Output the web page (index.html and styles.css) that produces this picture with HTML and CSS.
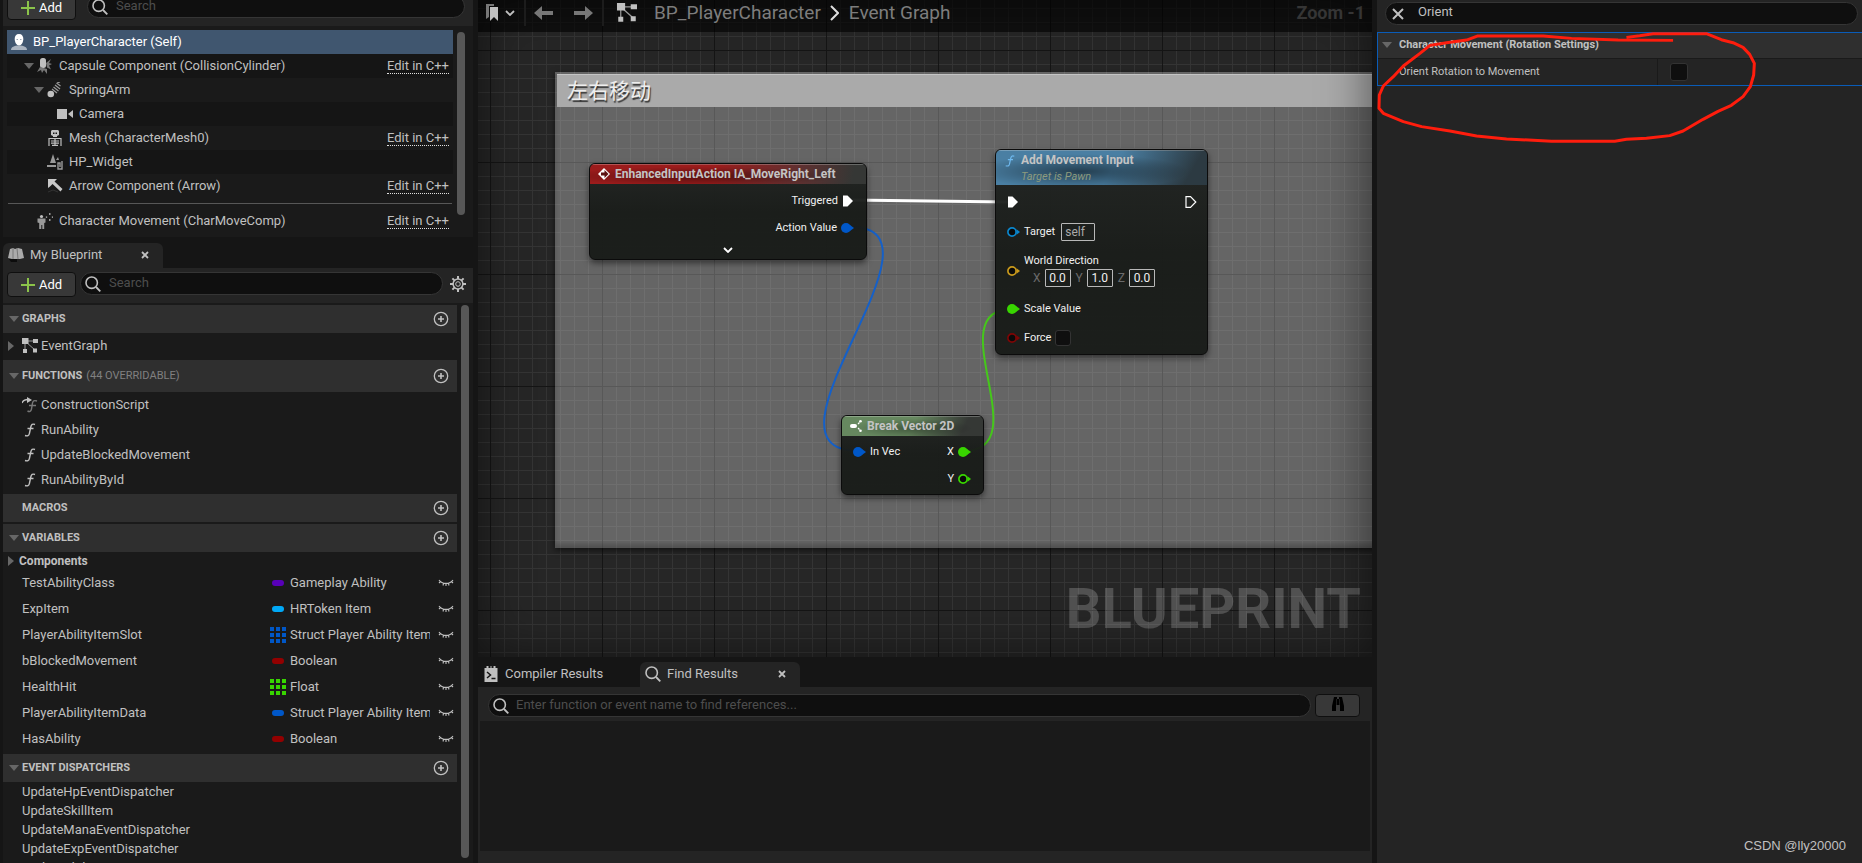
FILE: index.html
```html
<!DOCTYPE html>
<html lang="en">
<head>
 <meta charset="UTF-8">
 <title>BP_PlayerCharacter</title>
 <link rel="stylesheet" href="styles.css">
</head>
<body>
<!-- icon sprite -->
<svg class="sprite" aria-hidden="true">
 <symbol id="i-plus" viewBox="0 0 14 14"><path d="M7 0v14M0 7h14" stroke="#8bc34a" stroke-width="2"/></symbol>
 <symbol id="i-search" viewBox="0 0 16 16"><circle cx="6.700" cy="6.700" r="5.700" fill="none" stroke="currentColor" stroke-width="1.600"/><path d="M11 11l4.300 4.300" stroke="currentColor" stroke-width="1.800"/></symbol>
 <symbol id="i-down" viewBox="0 0 10 6"><path d="M0 0h10L5 6z" fill="#676767"/></symbol>
 <symbol id="i-right" viewBox="0 0 6 10"><path d="M0 0l6 5-6 5z" fill="#676767"/></symbol>
 <symbol id="i-close" viewBox="0 0 8 8"><path d="M1 1l6 6M7 1L1 7" stroke="currentColor" stroke-width="1.800"/></symbol>
 <symbol id="i-clear" viewBox="0 0 14 14"><path d="M2 2l10 10M12 2L2 12" stroke="currentColor" stroke-width="2"/></symbol>
 <symbol id="i-addc" viewBox="0 0 16 16"><circle cx="8" cy="8" r="6.700" fill="none" stroke="currentColor" stroke-width="1.300"/><path d="M8 5v6M5 8h6" stroke="currentColor" stroke-width="1.600"/></symbol>
 <symbol id="i-user" viewBox="0 0 16 16"><path d="M0 16c0-3 3-4.500 8-4.500s8 1.500 8 4.500z" fill="#aab4c0"/><path d="M8 0c3 0 4.300 2 4.300 5S10.500 11.500 8 11.500 3.700 8 3.700 5 5 0 8 0z" fill="#fff"/><path d="M5.500 5.500h1.500M9 5.500h1.500" stroke="#9aa6b4"/></symbol>
 <symbol id="i-capsule" viewBox="0 0 16 16"><rect x="3" y="0" width="6" height="10" rx="2.500" fill="#c0c0c0"/><path d="M9 5l5-4-2 4 3 1-3 1.500 2 4-4-2M3 9l-3 5 4-2 1 3 2-3 3 4v-5" fill="#777"/></symbol>
 <symbol id="i-spring" viewBox="0 0 16 16"><circle cx="3.800" cy="12" r="3.300" fill="#c0c0c0"/><path d="M5 7l5 4M6.500 5l5 4M8 3l5 4M9.500 1l4 3M10 1l3-1" stroke="#999" stroke-width="1.300"/></symbol>
 <symbol id="i-camera" viewBox="0 0 16 16"><path d="M0 3h10v10H0zM16 4v8l-5-4z" fill="#c0c0c0"/></symbol>
 <symbol id="i-mesh" viewBox="0 0 16 16"><path d="M5 0h6l1 1v4l-2 1v1H6V6L4 5V1z" fill="#c0c0c0"/><path d="M6 2.500h1.500V4H6zM8.500 2.500H10V4H8.500z" fill="#151515"/><path d="M2 16V8.500h12V16M4 11h8M4 13.200h8M5 15.400h6M8 8v8" fill="none" stroke="#c0c0c0" stroke-width="1.200"/></symbol>
 <symbol id="i-widget" viewBox="0 0 16 16"><path d="M3 9L6 0l3 9zM9 6l2-3 1 3zM0 11h9v2H0z" fill="#999"/><path d="M15 7v8h-4V9h2v4" fill="none" stroke="#999" stroke-width="1.400"/></symbol>
 <symbol id="i-arrow" viewBox="0 0 16 16"><path d="M1 1h9L7.500 3.500l8 7.500-2 2.500-8-7.500L3 8.500 1 10z" fill="#c8c8c8"/><path d="M1 14l5-2 5 2" fill="none" stroke="#333"/></symbol>
 <symbol id="i-move" viewBox="0 0 16 16"><circle cx="4.500" cy="3.500" r="1.600" fill="#c0c0c0"/><path d="M.500 5.500h8v4l-1.300.500V16H5.300v-4h-1v4H2.200v-6L.500 9.500z" fill="#999"/><path d="M9.500 3.500v1.300M12 1h1.500M15.500 3.500v1.300M12 7h1.500" stroke="#c0c0c0" stroke-width="1.300"/></symbol>
 <symbol id="i-book" viewBox="0 0 16 16"><path d="M2 2l3-1 2 1 3-1 4 1 2 9-4 1H4l-4-1z" fill="#aaa"/><path d="M5 1v11M9 1l1 11" stroke="#777"/><path d="M1 12h8v3H3z" fill="#0c0c0c"/></symbol>
 <symbol id="i-gear" viewBox="0 0 16 16"><circle cx="8" cy="8" r="4.900" fill="none" stroke="currentColor" stroke-width="1.500"/><circle cx="8" cy="8" r="2.300" fill="none" stroke="currentColor"/><path d="M8 0v3M8 13v3M0 8h3M13 8h3M2.400 2.400l2 2M11.600 11.600l2 2M13.600 2.400l-2 2M4.400 11.600l-2 2" stroke="currentColor" stroke-width="2"/></symbol>
 <symbol id="i-graph" viewBox="0 0 16 16"><path d="M3 4v10M3 3h11M4 4l9 8" stroke="#999" fill="none"/><path d="M0 0h6.500v6H0zM11 1h5v4h-5zM1 11h4v4H1zM11 10.500h4v4h-4z" fill="#c0c0c0"/></symbol>
 <symbol id="i-func" viewBox="0 0 12 14"><path d="M11 1.500C8.500.500 7.300 1.500 6.800 4L5.400 10.500C5 12.800 3.500 13.300 1 12.500M3.500 5.500h6" fill="none" stroke="currentColor" stroke-width="1.400"/></symbol>
 <symbol id="i-construct" viewBox="0 0 16 16"><path d="M15 4c-3-1-4 0-4.500 2L9.500 12c-.500 2.500-2 3-4 2M7 8.500h7" fill="none" stroke="#777" stroke-width="1.400"/><path d="M0 6c1-3 3-3.500 6-3.500" fill="none" stroke="#c0c0c0" stroke-width="1.400"/><path d="M5 0l5 3-5 3z" fill="#c0c0c0"/></symbol>
 <symbol id="i-eye" viewBox="0 0 16 8"><path d="M1 1c3 4.500 11 4.500 14 0M2.500 2.500L1 4M5.500 4.500l-.500 2M8 5v2M10.500 4.500l.500 2M13.500 2.500L15 4" fill="none" stroke="currentColor" stroke-width="1.100"/></symbol>
 <symbol id="i-grid" viewBox="0 0 16 16"><path d="M0 0h4v4H0zM6 0h4v4H6zM12 0h4v4h-4zM0 6h4v4H0zM6 6h4v4H6zM12 6h4v4h-4zM0 12h4v4H0zM6 12h4v4H6zM12 12h4v4h-4z" fill="currentColor"/></symbol>
 <symbol id="i-marks" viewBox="0 0 12 17"><path d="M0 0h8v2H3v11L0 15z" fill="#777"/><path d="M4 3h8v14l-4-4-4 4z" fill="#c0c0c0"/></symbol>
 <symbol id="i-chev" viewBox="0 0 10 6"><path d="M1 1l4 4 4-4" fill="none" stroke="currentColor" stroke-width="1.800"/></symbol>
 <symbol id="i-back" viewBox="0 0 20 14"><path d="M0 7l8-7v5h11v4H8v5z" fill="#777"/></symbol>
 <symbol id="i-fwd" viewBox="0 0 20 14"><path d="M20 7l-8-7v5H1v4h11v5z" fill="#777"/></symbol>
 <symbol id="i-crumb" viewBox="0 0 9 16"><path d="M1 1l7 7-7 7" fill="none" stroke="#ddd" stroke-width="2"/></symbol>
 <symbol id="i-event" viewBox="0 0 12 12"><path d="M6 0l6 6-6 6-6-6z" fill="#fff"/><path d="M6.500 2L10.500 6l-4 4V7.500H3v-3h3.500z" fill="#5c1212"/></symbol>
 <symbol id="i-break" viewBox="0 0 12 12"><rect x="0" y="4" width="7" height="4" rx="2" fill="#fff"/><path d="M8 4l1.500-1.500M8 8l1.500 1.500" stroke="#fff" stroke-width="1.200"/><circle cx="10.500" cy="1.300" r="1.300" fill="#fff"/><circle cx="10.500" cy="10.700" r="1.300" fill="#fff"/></symbol>
 <symbol id="p-exec" viewBox="0 0 12 12"><path d="M1 .500h4.500L11 6l-5.500 5.500H1z" fill="#fff"/></symbol>
 <symbol id="p-exec-open" viewBox="0 0 12 12"><path d="M1 .700h4.500L10.800 6l-5.300 5.300H1z" fill="none" stroke="#fff" stroke-width="1.200"/></symbol>
 <symbol id="p-full" viewBox="0 0 13 10"><circle cx="5" cy="5" r="5" fill="currentColor"/><path d="M9 2l4 3-4 3z" fill="currentColor"/></symbol>
 <symbol id="p-open" viewBox="0 0 13 10"><circle cx="5" cy="5" r="4.100" fill="#0a0a0a" stroke="currentColor" stroke-width="1.700"/><path d="M9.500 2.200L13 5 9.500 7.800z" fill="currentColor"/></symbol>
 <symbol id="i-log" viewBox="0 0 13 16"><path d="M0 2h2V0h2v2h2V0h1v2h2V0h2v2h2v14H0z" fill="#c0c0c0"/><path d="M2.500 6L6 9l-3.500 3M7 12.500h4" fill="none" stroke="#151515" stroke-width="1.500"/></symbol>
 <symbol id="i-bino" viewBox="0 0 12 14"><path d="M2 0h3v2h2V0h3l2 9v5H8V8H4v6H0V9z" fill="#000"/><path d="M4.500 2v6M7.500 2v6" stroke="#333" stroke-width=".600"/></symbol>
</svg>

<div class="editor">
 <aside class="left">
  <section class="panel components">
   <div class="toolbar">
    <button class="add-btn"><svg class="ic14"><use href="#i-plus"/></svg>Add</button>
    <label class="search wide"><svg class="ic16"><use href="#i-search"/></svg><input type="text" placeholder="Search" aria-label="Search components"></label>
   </div>
   <div class="tree-wrap">
    <ul class="tree">
     <li class="selected"><svg class="ic16"><use href="#i-user"/></svg><span>BP_PlayerCharacter (Self)</span></li>
     <li class="d1"><svg class="tri"><use href="#i-down"/></svg><svg class="ic16"><use href="#i-capsule"/></svg><span>Capsule Component (CollisionCylinder)</span><a href="#">Edit in C++</a></li>
     <li class="d2"><svg class="tri"><use href="#i-down"/></svg><svg class="ic16"><use href="#i-spring"/></svg><span>SpringArm</span></li>
     <li class="d3"><i class="tri"></i><svg class="ic16"><use href="#i-camera"/></svg><span>Camera</span></li>
     <li class="d2"><i class="tri"></i><svg class="ic16"><use href="#i-mesh"/></svg><span>Mesh (CharacterMesh0)</span><a href="#">Edit in C++</a></li>
     <li class="d2"><i class="tri"></i><svg class="ic16"><use href="#i-widget"/></svg><span>HP_Widget</span></li>
     <li class="d2"><i class="tri"></i><svg class="ic16"><use href="#i-arrow"/></svg><span>Arrow Component (Arrow)</span><a href="#">Edit in C++</a></li>
     <li class="split"></li>
     <li class="d1"><i class="tri"></i><svg class="ic16"><use href="#i-move"/></svg><span>Character Movement (CharMoveComp)</span><a href="#">Edit in C++</a></li>
    </ul>
    <div class="scroll short"></div>
   </div>
  </section>

  <section class="panel blueprint">
   <div class="tabs">
    <div class="tab active"><svg class="ic16"><use href="#i-book"/></svg><span>My Blueprint</span><button class="close" aria-label="Close"><svg class="ic8"><use href="#i-close"/></svg></button></div>
   </div>
   <div class="toolbar">
    <button class="add-btn"><svg class="ic14"><use href="#i-plus"/></svg>Add</button>
    <label class="search"><svg class="ic16"><use href="#i-search"/></svg><input type="text" placeholder="Search" aria-label="Search blueprint"></label>
    <button class="icon-btn gear" aria-label="Settings"><svg class="ic16"><use href="#i-gear"/></svg></button>
   </div>
   <div class="list-wrap">
    <div class="list">
     <div class="group">
      <h3><svg class="tri"><use href="#i-down"/></svg>GRAPHS<button class="icon-btn" aria-label="Add graph"><svg class="ic16"><use href="#i-addc"/></svg></button></h3>
      <div class="item graph-item"><svg class="tri-r"><use href="#i-right"/></svg><svg class="ic16"><use href="#i-graph"/></svg>EventGraph</div>
     </div>
     <div class="group">
      <h3 class="tall"><svg class="tri"><use href="#i-down"/></svg>FUNCTIONS <small>(44 OVERRIDABLE)</small><button class="icon-btn" aria-label="Add function"><svg class="ic16"><use href="#i-addc"/></svg></button></h3>
      <div class="item"><svg class="ic16"><use href="#i-construct"/></svg>ConstructionScript</div>
      <div class="item"><svg class="ic16 fn"><use href="#i-func"/></svg>RunAbility</div>
      <div class="item"><svg class="ic16 fn"><use href="#i-func"/></svg>UpdateBlockedMovement</div>
      <div class="item"><svg class="ic16 fn"><use href="#i-func"/></svg>RunAbilityById</div>
     </div>
     <div class="group">
      <h3><i class="tri"></i>MACROS<button class="icon-btn" aria-label="Add macro"><svg class="ic16"><use href="#i-addc"/></svg></button></h3>
     </div>
     <div class="group">
      <h3><svg class="tri"><use href="#i-down"/></svg>VARIABLES<button class="icon-btn" aria-label="Add variable"><svg class="ic16"><use href="#i-addc"/></svg></button></h3>
      <div class="category"><svg class="tri-r"><use href="#i-right"/></svg>Components</div>
      <div class="var"><span>TestAbilityClass</span><i class="pill purple"></i><span class="type">Gameplay Ability</span><svg class="eye"><use href="#i-eye"/></svg></div>
      <div class="var"><span>ExpItem</span><i class="pill cyan"></i><span class="type">HRToken Item</span><svg class="eye"><use href="#i-eye"/></svg></div>
      <div class="var"><span>PlayerAbilityItemSlot</span><svg class="ic16 blue"><use href="#i-grid"/></svg><span class="type">Struct Player Ability Item</span><svg class="eye"><use href="#i-eye"/></svg></div>
      <div class="var"><span>bBlockedMovement</span><i class="pill red"></i><span class="type">Boolean</span><svg class="eye"><use href="#i-eye"/></svg></div>
      <div class="var"><span>HealthHit</span><svg class="ic16 green"><use href="#i-grid"/></svg><span class="type">Float</span><svg class="eye"><use href="#i-eye"/></svg></div>
      <div class="var"><span>PlayerAbilityItemData</span><i class="pill bluebg"></i><span class="type">Struct Player Ability Item</span><svg class="eye"><use href="#i-eye"/></svg></div>
      <div class="var"><span>HasAbility</span><i class="pill red"></i><span class="type">Boolean</span><svg class="eye"><use href="#i-eye"/></svg></div>
     </div>
     <div class="group">
      <h3><svg class="tri"><use href="#i-down"/></svg>EVENT DISPATCHERS<button class="icon-btn" aria-label="Add dispatcher"><svg class="ic16"><use href="#i-addc"/></svg></button></h3>
      <div class="dispatcher">UpdateHpEventDispatcher</div>
      <div class="dispatcher">UpdateSkillItem</div>
      <div class="dispatcher">UpdateManaEventDispatcher</div>
      <div class="dispatcher">UpdateExpEventDispatcher</div>
      <div class="dispatcher">UpdateAbilityEvent</div>
     </div>
    </div>
    <div class="scroll"></div>
   </div>
  </section>
 </aside>

 <main class="center">
  <div class="graph">
   <div class="comment"><div class="comment-title">左右移动</div></div>
   <svg class="wires">
    <path d="M372 200L530 202" stroke="#fff" stroke-width="3"/>
    <path d="M373 227C482 227 267 451 380 451" stroke="#1560c8" stroke-width="2"/>
    <path d="M485 451C562 451 459 309 534 309" stroke="#45c81a" stroke-width="2"/>
   </svg>

   <div class="node node-event">
    <div class="node-head red-head"><svg class="ic12"><use href="#i-event"/></svg>EnhancedInputAction IA_MoveRight_Left</div>
    <div class="pin-row out"><span>Triggered</span><svg class="exec"><use href="#p-exec"/></svg></div>
    <div class="pin-row out"><span>Action Value</span><svg class="pin blue"><use href="#p-full"/></svg></div>
    <button class="expand" aria-label="Expand"><svg class="chev"><use href="#i-chev"/></svg></button>
   </div>

   <div class="node node-move">
    <div class="node-head blue-head"><svg class="ic12 fblue"><use href="#i-func"/></svg><div>Add Movement Input<em>Target is Pawn</em></div></div>
    <div class="pin-row both"><svg class="exec"><use href="#p-exec"/></svg><svg class="exec"><use href="#p-exec-open"/></svg></div>
    <div class="pin-row"><svg class="pin sky"><use href="#p-open"/></svg><label for="target">Target</label><input id="target" class="self" type="text" value="self"></div>
    <div class="pin-row vector"><svg class="pin gold"><use href="#p-open"/></svg>
     <div>
      <span>World Direction</span>
      <div class="xyz"><label for="vx">X</label><input id="vx" type="text" value="0.0"><label for="vy">Y</label><input id="vy" type="text" value="1.0"><label for="vz">Z</label><input id="vz" type="text" value="0.0"></div>
     </div>
    </div>
    <div class="pin-row"><svg class="pin green"><use href="#p-full"/></svg><span>Scale Value</span></div>
    <div class="pin-row"><svg class="pin dred"><use href="#p-open"/></svg><label for="force">Force</label><input id="force" type="checkbox"></div>
   </div>

   <div class="node node-break">
    <div class="node-head green-head"><svg class="ic12"><use href="#i-break"/></svg>Break Vector 2D</div>
    <div class="pin-row both"><div class="pin-in"><svg class="pin blue"><use href="#p-full"/></svg><span>In Vec</span></div><div class="pin-in"><span>X</span><svg class="pin green"><use href="#p-full"/></svg></div></div>
    <div class="pin-row out"><span>Y</span><svg class="pin green"><use href="#p-open"/></svg></div>
   </div>

   <div class="watermark">BLUEPRINT</div>
   <div class="crumbs">
    <button class="marks" aria-label="Bookmarks"><svg class="mark-ic"><use href="#i-marks"/></svg><svg class="chev"><use href="#i-chev"/></svg></button>
    <div class="nav">
     <button aria-label="Back"><svg class="nav-ic"><use href="#i-back"/></svg></button>
     <button aria-label="Forward"><svg class="nav-ic"><use href="#i-fwd"/></svg></button>
    </div>
    <svg class="ic22"><use href="#i-graph"/></svg>
    <span>BP_PlayerCharacter</span>
    <svg class="crumb-ic"><use href="#i-crumb"/></svg>
    <span>Event Graph</span>
    <b>Zoom -1</b>
   </div>
  </div>

  <div class="results">
   <div class="tabs">
    <div class="tab"><svg class="ic16"><use href="#i-log"/></svg><span>Compiler Results</span></div>
    <div class="tab active"><svg class="ic16"><use href="#i-search"/></svg><span>Find Results</span><button class="close" aria-label="Close"><svg class="ic8"><use href="#i-close"/></svg></button></div>
   </div>
   <div class="find-bar">
    <label class="search"><svg class="ic16"><use href="#i-search"/></svg><input type="text" placeholder="Enter function or event name to find references..." aria-label="Find references"></label>
    <button class="find-btn" aria-label="Find in blueprints"><svg class="bino"><use href="#i-bino"/></svg></button>
   </div>
   <div class="find-list"></div>
  </div>
 </main>

 <aside class="details">
  <div class="search"><button class="clear" aria-label="Clear"><svg class="ic14"><use href="#i-clear"/></svg></button><input type="text" value="Orient" aria-label="Search details"></div>
  <div class="category-box">
   <h4><svg class="tri"><use href="#i-down"/></svg>Character Movement (Rotation Settings)</h4>
   <div class="prop"><label for="orient">Orient Rotation to Movement</label><div><input id="orient" type="checkbox"></div></div>
  </div>
  <!-- hand drawn marker -->
  <svg class="marker" viewBox="21 90 1150 345"><path d="M910 121L745 120L605 115L520 108H322L290 120L230 128L180 136L150 160L100 198L70 230L40 258L28 285L27 325L40 340L100 365L155 380L240 393L320 408L410 417L545 424H735L770 418L830 415L900 407L940 393L1000 358L1045 334L1085 316L1120 290L1142 260L1152 225L1154 190L1140 163L1120 142L1090 128L1055 119L1010 101H850L810 107L770 112"/></svg>
  <footer>CSDN @lly20000</footer>
 </aside>
</div>
</body>
</html>
```
FILE: styles.css
```css
*{
    margin: 0;
    padding: 0;
    box-sizing: border-box;
}
body{
    background: #151515;
    color: #c0c0c0;
    font-family: Roboto, "Noto Sans CJK SC", sans-serif;
    font-size: 13px;
    line-height: 16px;
    overflow: hidden;
}
button, input{
    font: inherit;
    color: inherit;
    background: none;
    border: none;
    outline: none;
}
button{
    display: flex;
    align-items: center;
    justify-content: center;
}
ul{ list-style: none; }
svg{ flex: none; display: block; }
.sprite{ position: absolute; width: 0; height: 0; }

.ic8{ width: 8px; height: 8px; }
.ic12{ width: 12px; height: 12px; }
.ic14{ width: 14px; height: 14px; }
.ic16{ width: 16px; height: 16px; }
.ic22{ width: 22px; height: 20px; }
.tri{ width: 10px; height: 6px; flex: none; }
.tri-r{ width: 6px; height: 10px; }
.chev{ width: 10px; height: 6px; }

/* layout */
.editor{
    display: grid;
    grid-template-columns: 470px 1fr 485px;
    column-gap: 5px;
    padding-left: 3px;
    height: 100vh;
}
.left{
    display: flex;
    flex-direction: column;
    gap: 6px;
    min-height: 0;
    overflow: hidden;
}
.center{
    display: flex;
    flex-direction: column;
    min-width: 0;
    min-height: 0;
}

/* shared controls */
.toolbar{
    display: flex;
    align-items: flex-start;
    gap: 4px;
    height: 35px;
    padding: 4px;
    background: #242424;
}
.add-btn{
    width: 69px;
    height: 25px;
    gap: 4px;
    background: #383838;
    border: 1px solid #0f0f0f;
    border-radius: 4px;
    color: #fff;
}
.search{
    display: flex;
    align-items: center;
    gap: 8px;
    flex: 1;
    height: 23px;
    padding: 0 4px;
    background: #0f0f0f;
    border: 1px solid #353535;
    border-radius: 12px;
}
.search.wide{
    margin: 0 4px 0 7px;
}
.search input{
    flex: 1;
    min-width: 0;
    padding-bottom: 1px;
}
.search input::placeholder{ color: #4d4d4d; }
.icon-btn{
    width: 26px;
    height: 23px;
}
.icon-btn.gear{ width: 22px; }
.scroll{
    width: 8px;
    background: #575757;
    border-radius: 4px;
}
.tabs{
    display: flex;
    height: 25px;
}
.tab{
    display: flex;
    align-items: center;
    gap: 6px;
    width: 160px;
    padding: 0 5px 2px;
    border-radius: 6px 6px 0 0;
}
.tab.active{ background: #242424; }
.close{
    width: 20px;
    height: 20px;
    margin-left: auto;
    margin-right: 3px;
}

/* components panel */
.components{
    margin-top: -9px;
}
.tree-wrap{
    display: flex;
    gap: 4px;
    padding: 4px 8px 4px 4px;
    background: #1a1a1a;
}
.tree{ flex: 1; }
.tree li{
    display: flex;
    align-items: center;
    height: 24px;
    padding-right: 4px;
}
.tree li:nth-child(even){ background: #151515; }
.tree li.selected{
    background: #40566f;
    color: #fff;
    padding-left: 4px;
}
.tree .ic16{ margin-right: 6px; }
.tree .tri{ margin-right: 3px; }
.tree .d1{ padding-left: 17px; }
.tree .d2{ padding-left: 27px; }
.tree .d3{ padding-left: 37px; }
.tree li.split{
    height: 1px;
    margin: 5px 1px;
    background: #575757;
}
.tree a{
    margin-left: auto;
    color: inherit;
    text-decoration: none;
    border-bottom: 1px dotted #e0e0e0;
    line-height: 15px;
}
.scroll.short{
    height: 183px;
    margin-top: 2px;
}

/* my blueprint panel */
.blueprint{
    display: flex;
    flex-direction: column;
    flex: 1;
    min-height: 0;
}
.list-wrap{
    display: flex;
    gap: 4px;
    flex: 1;
    min-height: 0;
    padding: 2px 4px 5px 0;
    background: #1a1a1a;
}
.list{
    flex: 1;
    height: calc(100% + 5px);
    overflow: hidden;
}
.group{ margin-bottom: 2px; }
.group h3{
    display: flex;
    align-items: center;
    height: 28px;
    padding: 0 3px 0 6px;
    background: #2f2f2f;
    font-size: 11px;
    font-weight: 700;
}
.group h3.tall{ height: 32px; }
.group h3 .tri{ margin-right: 3px; }
.group h3 small{
    margin-left: 4px;
    font-size: 11px;
    font-weight: 400;
    color: #808080;
}
.group h3 .icon-btn{ margin-left: auto; }
.item{
    display: flex;
    align-items: center;
    gap: 3px;
    height: 25px;
    padding-left: 19px;
}
.fn{ padding: 1px; }
.item.graph-item{ padding-left: 5px; }
.graph-item .tri-r{ margin-right: 5px; }
.category{
    display: flex;
    align-items: center;
    gap: 5px;
    height: 18px;
    padding-left: 5px;
    font-size: 12px;
    font-weight: 700;
}
.var{
    display: grid;
    grid-template-columns: 1fr 16px 144px 24px;
    align-items: center;
    height: 26px;
    padding: 0 3px 0 19px;
}
.type{
    margin-left: 4px;
    overflow: hidden;
    white-space: nowrap;
}
.eye{ width: 16px; height: 8px; justify-self: end; }
.pill{
    width: 12px;
    height: 6px;
    margin: 0 2px;
    border-radius: 3px;
}
.purple{ background: #5800b8; }
.cyan{ background: #00a8f6; }
.red{ background: #930000; }
.bluebg{ background: #0057c8; }
.blue{ color: #0057c8; }
.green{ color: #38d500; }
.sky{ color: #0a86cc; }
.gold{ color: #c99a1c; }
.dred{ color: #7d0505; }
.dispatcher{
    height: 19px;
    padding-left: 19px;
    line-height: 19px;
}

/* graph canvas */
.graph{
    position: relative;
    flex: 1;
    min-height: 0;
    overflow: hidden;
    background-color: #262626;
    background-image:
        linear-gradient(90deg, #151515 1px, transparent 1px),
        linear-gradient(#151515 1px, transparent 1px),
        linear-gradient(90deg, #343434 1px, transparent 1px),
        linear-gradient(#343434 1px, transparent 1px);
    background-size: 112px 112px, 112px 112px, 14px 14px, 14px 14px;
    background-position: 12px 50px;
}
/* dark edges */
.graph::after{
    content: "";
    position: absolute;
    inset: 0;
    box-shadow: inset 0 0 50px rgba(0, 0, 0, .55);
    pointer-events: none;
}
.comment{
    position: absolute;
    left: 77px;
    right: -10px;
    top: 72px;
    height: 476px;
    padding: 2px;
    background: rgba(255, 255, 255, .29);
    box-shadow: 0 2px 6px rgba(0, 0, 0, .6), inset 0 -4px 4px rgba(0, 0, 0, .2);
}
.comment-title{
    height: 33px;
    padding-left: 10px;
    background: #aaa;
    border-top: 1px solid #c4c4c4;
    color: #eee;
    font-size: 21px;
    line-height: 33px;
    text-shadow: 1px 2px 1px #333;
}
.wires{
    position: absolute;
    inset: 0;
    width: 100%;
    height: 100%;
    fill: none;
}
.node{
    position: absolute;
    background: linear-gradient(rgba(33, 36, 34, .96), rgba(24, 27, 24, .96) 50%);
    border: 1px solid #0b0b0b;
    border-radius: 6px;
    box-shadow: 0 3px 6px rgba(0, 0, 0, .5);
    color: #f0f0f0;
    font-size: 11px;
    line-height: 14px;
    overflow: hidden;
}
.node-event{ left: 111px; top: 163px; width: 278px; }
.node-move{ left: 517px; top: 149px; width: 213px; }
.node-break{ left: 363px; top: 415px; width: 143px; }
.node-head{
    display: flex;
    align-items: center;
    gap: 5px;
    height: 20px;
    padding: 0 0 2px 8px;
    border-top: 1px solid rgba(255, 255, 255, .25);
    color: #c4c4c4;
    font-size: 12px;
    font-weight: 700;
    white-space: nowrap;
}
.red-head{ background: radial-gradient(ellipse at 40% 60%, rgba(0, 0, 0, .45), transparent 60%), linear-gradient(100deg, #9c1c1c 45%, #603030 75%, #353735 95%); }
.blue-head{
    height: 35px;
    align-items: flex-start;
    padding-top: 2px;
    background: radial-gradient(ellipse at 40% 60%, rgba(0, 0, 0, .5), transparent 60%), linear-gradient(120deg, #4a7fa3 55%, #2c3a42 90%);
}
.green-head{ background: radial-gradient(ellipse at 50% 60%, rgba(0, 0, 0, .35), transparent 60%), linear-gradient(115deg, #66885f 50%, #353835 85%); }
.blue-head em{
    display: block;
    color: #8d9b7e;
    font-size: 11px;
    font-weight: 400;
    line-height: 18px;
}
.blue-head div{ line-height: 15px; }
.fblue{ color: #6fb9ee; margin-top: 2px; }
.pin-row{
    display: flex;
    align-items: center;
    gap: 4px;
    height: 27px;
    padding: 0 11px;
}
.pin-row.out{ justify-content: flex-end; }
.pin-row.both{ justify-content: space-between; }
.pin-in{ display: flex; align-items: center; gap: 4px; }
.node-event .pin-row{ padding-right: 12px; }
.node-event .pin-row:nth-child(2){ margin-top: 3px; }
.node-break .pin-row{ padding-right: 12px; }
.node-break .pin-row:nth-child(2){ margin-top: 2px; }
.node-break .pin-row:last-child{ margin-bottom: 2px; }
.exec{ width: 12px; height: 12px; }
.pin{ width: 13px; height: 10px; }
.expand{
    width: 100%;
    height: 18px;
    color: #fff;
}
.node-move .pin-row{ height: 29px; }
.node-move .pin-row.both{ height: 33px; padding-right: 10px; }
.node-move .pin-row:nth-child(3){ height: 28px; }
.node-move .pin-row.vector{ height: 49px; }
.node-move .pin-row:nth-child(5){ height: 28px; }
.node-move .pin-row:last-child{ margin-bottom: 2px; }
.node input[type=text]{
    width: 26px;
    height: 18px;
    border: 1px solid #b8b8b8;
    border-radius: 1px;
    font-size: 12px;
    text-align: center;
}
.node input.self{
    width: 34px;
    margin-left: 2px;
    padding-left: 3px;
    color: #aaa;
    text-align: left;
}
.xyz{
    display: flex;
    align-items: center;
    gap: 4px;
    padding-left: 9px;
    margin-top: 1px;
    color: #6b6b6b;
    font-size: 12px;
}
.xyz input{ color: #f0f0f0; margin-right: 1px; }
input[type=checkbox]{
    appearance: none;
    width: 16px;
    height: 16px;
    background: #0f0f0f;
    border: 1px solid #333;
    border-radius: 3px;
}
.watermark{
    position: absolute;
    right: 11px;
    bottom: 12px;
    color: rgba(255, 255, 255, .2);
    font-size: 56px;
    font-weight: 700;
    line-height: 72px;
}
.crumbs{
    position: absolute;
    inset: 0 0 auto 0;
    display: flex;
    align-items: center;
    height: 32px;
    padding: 0 7px 7px 8px;
    background: rgba(0, 0, 0, .6);
    color: #7d7d7d;
    font-size: 19px;
    line-height: 24px;
    z-index: 1;
}
.marks{ gap: 7px; color: #c0c0c0; }
.mark-ic{ width: 12px; height: 17px; }
.nav{
    display: flex;
    align-items: center;
    gap: 19px;
    height: 26px;
    margin: 0 12px 0 9px;
    padding: 0 9px 0 8px;
    border-left: 2px solid #1c1c1c;
    border-right: 2px solid #1c1c1c;
}
.nav-ic{ width: 20px; height: 14px; }
.crumbs .ic22{ margin-right: 16px; }
.crumb-ic{ width: 9px; height: 16px; margin: 0 10px 0 9px; }
.crumbs b{ margin-left: auto; color: #353535; font-size: 18px; }

/* find results */
.results{
    height: 206px;
    padding-top: 5px;
    display: flex;
    flex-direction: column;
}
.results .tabs{ gap: 2px; }
.find-bar{
    display: flex;
    gap: 4px;
    padding: 7px 12px 4px 10px;
    background: #242424;
}
.find-bar .search{ gap: 7px; }
.find-btn{
    width: 45px;
    height: 23px;
    padding-bottom: 3px;
    background: #383838;
    border: 1px solid #0f0f0f;
    border-radius: 4px;
}
.bino{ width: 12px; height: 14px; }
.find-list{
    flex: 1;
    background: #1a1a1a;
    border: solid #242424;
    border-width: 0 2px 12px 2px;
}

/* details */
.details{
    position: relative;
    display: flex;
    flex-direction: column;
    background: #242424;
    padding-top: 2px;
}
.details .search{
    flex: none;
    gap: 12px;
    margin: 0 4px 7px 8px;
}
.details .search input{ padding-bottom: 3px; }
.clear{ width: 16px; height: 16px; }
.category-box{
    border: 1px solid #0a5cb8;
    border-right: none;
    font-size: 11px;
}
.category-box h4{
    display: flex;
    align-items: center;
    gap: 7px;
    height: 26px;
    padding: 0 0 2px 4px;
    background: #2f2f2f;
    border-bottom: 1px solid #1a1a1a;
    font-size: 11px;
}
.prop{
    display: grid;
    grid-template-columns: 280px 1fr;
    height: 26px;
}
.prop label{
    padding-left: 21px;
    line-height: 25px;
    border-right: 1px solid #1a1a1a;
}
.prop div{
    display: flex;
    align-items: center;
    padding-left: 12px;
}
.prop input{ width: 18px; height: 18px; }
.marker{
    position: absolute;
    left: 0;
    top: 30px;
    width: 383px;
    height: 115px;
    fill: none;
    stroke: #ff1d0d;
    stroke-width: 9;
    stroke-linejoin: round;
    overflow: visible;
    pointer-events: none;
}
.details footer{
    margin-top: auto;
    padding: 0 16px 9px 0;
    font-family: "Liberation Sans", Arial, sans-serif;
    text-align: right;
}
```
